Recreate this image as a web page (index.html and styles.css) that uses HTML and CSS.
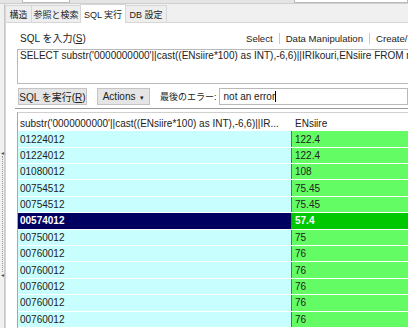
FILE: index.html
```html
<!DOCTYPE html>
<html lang="ja">
<head>
    <meta charset="UTF-8">
    <title>SQL 実行</title>
    <link rel="stylesheet" href="styles.css">
</head>
<body>
    <div class="topbar">
        <span class="topbar-box first"></span>
        <span class="topbar-box second"></span>
    </div>
    <div class="frame">
        <div class="splitter">
            <span class="grip-arrow">&#9666;</span>
            <span class="grip-line"></span>
            <span class="grip-arrow">&#9666;</span>
        </div>
        <div class="workspace">
            <div class="tabs">
                <div class="tab t1">構造</div>
                <div class="tab t2">参照と検索</div>
                <div class="tab t3 active">SQL 実行</div>
                <div class="tab t4">DB 設定</div>
            </div>
            <div class="page">
                <div class="sql-head">
                    <span class="sql-label">SQL を入力(<u>S</u>)</span>
                    <div class="sql-tools">
                        <span>Select</span>
                        <i class="tool-sep"></i>
                        <span>Data Manipulation</span>
                        <i class="tool-sep"></i>
                        <span>Create/</span>
                    </div>
                </div>
                <div class="sql-box">SELECT substr('0000000000'||cast((ENsiire*100) as INT),-6,6)||IRIkouri,ENsiire FROM m</div>
                <div class="run-row">
                    <button class="btn run-btn">SQL を実行(<u>R</u>)</button>
                    <button class="btn actions-btn">Actions <span class="caret-down">&#9662;</span></button>
                    <span class="err-label">最後のエラー:</span>
                    <div class="err-input">not an error<span class="cursor"></span></div>
                </div>
                <div class="results">
                    <div class="grid">
                        <div class="row head">
                            <div class="cell c1">substr('0000000000'||cast((ENsiire*100) as INT),-6,6)||IR...</div>
                            <div class="cell c2">ENsiire</div>
                        </div>
                        <div class="row"><div class="cell c1">01224012</div><div class="cell c2">122.4</div></div>
                        <div class="row"><div class="cell c1">01224012</div><div class="cell c2">122.4</div></div>
                        <div class="row"><div class="cell c1">01080012</div><div class="cell c2">108</div></div>
                        <div class="row"><div class="cell c1">00754512</div><div class="cell c2">75.45</div></div>
                        <div class="row"><div class="cell c1">00754512</div><div class="cell c2">75.45</div></div>
                        <div class="row selected"><div class="cell c1">00574012</div><div class="cell c2">57.4</div></div>
                        <div class="row"><div class="cell c1">00750012</div><div class="cell c2">75</div></div>
                        <div class="row"><div class="cell c1">00760012</div><div class="cell c2">76</div></div>
                        <div class="row"><div class="cell c1">00760012</div><div class="cell c2">76</div></div>
                        <div class="row"><div class="cell c1">00760012</div><div class="cell c2">76</div></div>
                        <div class="row"><div class="cell c1">00760012</div><div class="cell c2">76</div></div>
                        <div class="row"><div class="cell c1">00760012</div><div class="cell c2">76</div></div>
                    </div>
                </div>
            </div>
        </div>
    </div>
</body>
</html>
```

FILE: styles.css
```css
* { margin: 0; padding: 0; box-sizing: border-box; }

body {
    font-family: "Liberation Sans", "Noto Sans CJK JP", sans-serif;
    font-size: 10px;
    color: #222;
    background: #f0f0f0;
    width: 408px;
    height: 328px;
    overflow: hidden;
}

/* strip of the toolbar above */
.topbar {
    height: 4px;
    background: #e4e4e4;
    border-bottom: 1px solid #cfcfcf;
    position: relative;
}

.topbar-box {
    position: absolute;
    top: 0;
    height: 3px;
    background: #fff;
    border: 1px solid #bbb;
    border-top: none;
}

.topbar-box.first { left: 22px; width: 48px; }
.topbar-box.second { left: 294px; width: 114px; }

.frame {
    display: flex;
    height: 324px;
}

.splitter {
    width: 5px;
    flex-shrink: 0;
    background: #f0f0f0;
    border-right: 1px solid #c8c8c8;
    display: flex;
    flex-direction: column;
    align-items: center;
    padding-top: 146px;
}

.grip-arrow {
    font-size: 6px;
    line-height: 6px;
    color: #555;
}

.grip-line {
    width: 0;
    height: 116px;
    border-left: 1px dotted #999;
}

.workspace {
    flex: 1;
    display: flex;
    flex-direction: column;
    min-width: 0;
}

/* tabs */
.tabs {
    height: 18px;
    display: flex;
    align-items: flex-end;
    font-size: 9px;
    white-space: nowrap;
}

.tab {
    height: 17px;
    display: flex;
    align-items: center;
    justify-content: center;
    background: #eeeeee;
    border: 1px solid #d6d6d6;
    border-bottom: none;
    margin-right: -1px;
}

.t1 { width: 27px; }
.t2 { width: 50px; }
.t3 { width: 46px; }
.t4 { width: 42px; }

.tab.active {
    height: 19px;
    background: #fff;
    position: relative;
    z-index: 1;
    margin-bottom: -1px;
}

/* tab page */
.page {
    flex: 1;
    background: #fff;
    border-top: 1px solid #d6d6d6;
    border-left: 1px solid #d6d6d6;
    padding-left: 11px;
    display: flex;
    flex-direction: column;
    min-width: 0;
    overflow: hidden;
}

.sql-head {
    height: 27px;
    display: flex;
    align-items: flex-end;
    padding-bottom: 4px;
    white-space: nowrap;
}

.sql-label {
    width: 224px;
    flex-shrink: 0;
    padding-left: 3px;
    line-height: 12px;
}

.sql-tools {
    display: flex;
    align-items: center;
    gap: 6px;
    line-height: 12px;
    flex-shrink: 0;
    padding-left: 5px;
    font-size: 9.6px;
}

.tool-sep {
    width: 1px;
    height: 11px;
    background: #c8c8c8;
}

.sql-box {
    height: 38px;
    border: 1px solid #b9b9b9;
    border-right: none;
    padding: 0 2px;
    line-height: 12px;
    white-space: nowrap;
    overflow: hidden;
}

.run-row {
    height: 18px;
    margin-top: 4px;
    display: flex;
    align-items: stretch;
    white-space: nowrap;
}

.btn {
    font-family: inherit;
    font-size: 10px;
    color: #222;
    background: #e5e5e5;
    border: 1px solid #c4c4c4;
    margin-right: 10px;
}

.run-btn { width: 69px; margin-left: 1px; }
.actions-btn { width: 53px; }

.caret-down {
    font-size: 7px;
    margin-left: 2px;
}

.err-label {
    align-self: center;
    font-size: 9px;
    flex-shrink: 0;
    margin-right: 2px;
}

.err-input {
    flex: 1;
    border: 1px solid #b9b9b9;
    background: #fff;
    padding-left: 4px;
    display: flex;
    align-items: center;
}

.cursor {
    width: 1px;
    height: 11px;
    background: #000;
}

/* result grid */
.results {
    flex: 1;
    margin-top: 3px;
    margin-left: -2px;
    border-top: 1px solid #9a9a9a;
    padding-top: 3px;
    padding-left: 2px;
}

.grid {
    border-top: 1px solid #cfcfcf;
    border-left: 1px solid #a8a8a8;
}

.row {
    display: flex;
    height: 16.4px;
    border-bottom: 1px solid #fff;
}

.cell {
    padding-left: 2px;
    display: flex;
    align-items: center;
    white-space: nowrap;
    overflow: hidden;
}

.c1 {
    width: 273px;
    background: #c8fefe;
}

.c2 {
    flex: 1;
    background: #64fc64;
    border-left: 1px solid #6a6a6a;
    padding-left: 3px;
}

.row.head {
    height: 18px;
    border-bottom: none;
    padding-top: 2px;
}

.row.head .cell {
    background: #fff;
    border-left: none;
}

.row.head .c2 { padding-left: 4px; }

.row.selected .cell {
    font-weight: bold;
    color: #fff;
}

.row.selected .c1 { background: #000060; }
.row.selected .c2 { background: #00c800; }
```
